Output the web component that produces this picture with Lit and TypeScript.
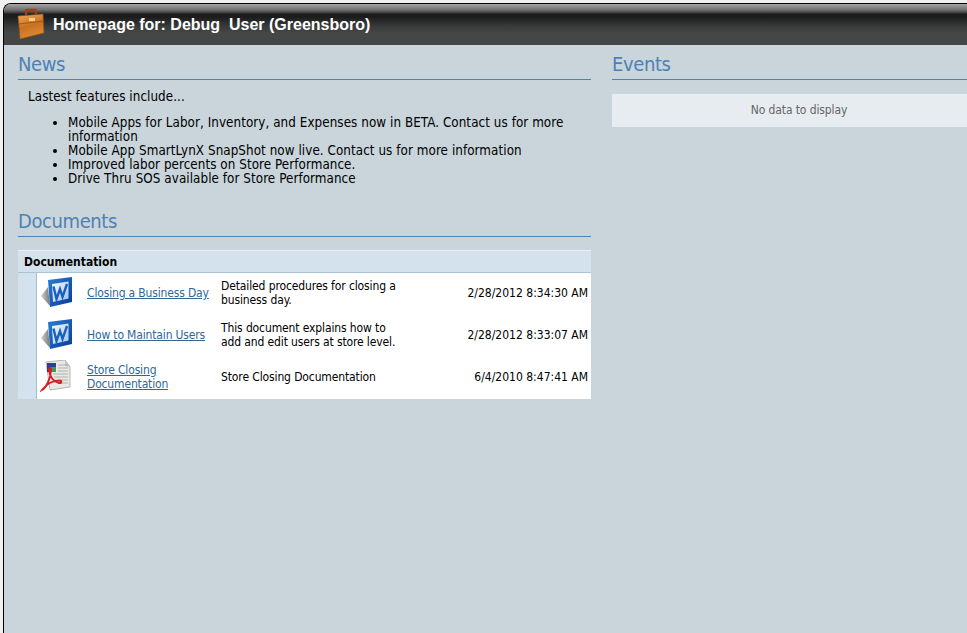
import { LitElement, html, css, svg } from "lit";
import { customElement } from "lit/decorators.js";

const word = (id: string) => svg`<svg class="ico" width="34" height="32" viewBox="0 0 34 32">
  <defs>
    <linearGradient id="${id}" x1="0" y1="0" x2="1" y2="1"><stop offset="0" stop-color="#2a7ed4"/><stop offset="1" stop-color="#0a3a9a"/></linearGradient>
    <linearGradient id="${id}p" x1="0" y1="0" x2="1" y2="1"><stop offset="0" stop-color="#f6fafe"/><stop offset="1" stop-color="#9cc6ec"/></linearGradient>
    <linearGradient id="${id}s" x1="0" y1="0" x2="1" y2="0"><stop offset="0" stop-color="#d0d0d0"/><stop offset="1" stop-color="#777"/></linearGradient>
  </defs>
  <path d="M1 20 L8 11 L10 30 Z" fill="url(#${id}s)"/>
  <path d="M8 4 L32 1 L32 26 L10 31 Z" fill="url(#${id})"/>
  <path d="M12 8 L28.500 5.500 L28.500 22.500 L13 26 Z" fill="url(#${id}p)"/>
  <path d="M13.500 10.500 L16.500 23 L20 13 L22.500 21 L27 8" fill="none" stroke="#1a5fc0" stroke-width="2.400"/>
</svg>`;

const pdf = svg`<svg class="ico" width="34" height="32" viewBox="0 0 34 32">
  <path d="M6 2 L25 0 L30 7 L30 27 L10 30 Z" fill="#e9e8e4" stroke="#a5a5a5" stroke-width=".8"/>
  <path d="M25 0 L25 6 L30 7 Z" fill="#c4c4c4"/>
  <rect x="7" y="3" width="9" height="9" fill="#27408f"/>
  <rect x="10" y="7" width="6" height="5" fill="#3d9a55"/>
  <path d="M18 5 H28 M18 8 H28 M18 11 H28 M13 14 H28 M14 17 H28 M20 20 H28 M20 23 H28" stroke="#b0b0b0" stroke-width="1"/>
  <path d="M2 30 C6 28 11 18 11 10 C11 7 8.500 7 9 10 C9.500 17 14 22 19 23 C22 23.500 22 20.500 19 20.500 C13 20.500 6 24 2 30 Z" fill="none" stroke="#d31f26" stroke-width="1.900"/>
</svg>`;

@customElement("app-root")
export class AppRoot extends LitElement {
  static styles = css`
    :host { display: block; height: 633px; overflow: hidden; background: #f0f0f0; font-family: "DejaVu Sans Condensed", "DejaVu Sans", Verdana, sans-serif; font-stretch: condensed; font-size: 12px; color: #000; }
    .frame { box-sizing: border-box; height: 636px; margin: 3px 0 0 3px; border: 1px solid #000; border-right: 0; border-bottom: 0; border-top-left-radius: 8px; overflow: hidden; background: #c9d5db; }
    .bar { height: 41px; box-sizing: border-box; display: flex; align-items: center; gap: 5px; padding-left: 12px;
      background: linear-gradient(#a6a6a6 0, #6e6e6e 6px, #3a3a3a 9px, #1c1c1c 10px, #1c1c1c 13px, #383a3a 22px, #454746 29px, #454746 100%); }
    .brief { display: block; margin-top: -1px; }
    .bar h1 { margin: 0; font: bold 16px "Liberation Sans", Arial, sans-serif; color: #fff; white-space: pre; }
    .cols { display: grid; grid-template-columns: 573px 1fr; column-gap: 21px; padding: 6px 0 0 14px; }
    h2 { margin: 0; font-size: 20px; font-weight: 400; line-height: 27px; color: #4f81b3; border-bottom: 1px solid #5383ad; height: 29px; box-sizing: border-box; letter-spacing: -.4px; }
    .news { padding: 0 0 0 10px; font-size: 13.3px; letter-spacing: .07px; }
    .news p { margin: 9px 0 11px; line-height: 16px; }
    .news ul { margin: 0 0 22px; padding: 0 0 0 40px; line-height: 14px; }
    .docs-head { margin-top: 13px; height: 23px; box-sizing: border-box; background: #d3e2ec; border-top: 1px solid #e6eff5; border-bottom: 1px solid #a9c4d6; font-weight: bold; padding: 1px 0 0 6px; line-height: 21px; }
    .tbl { display: grid; grid-template-columns: 19px 50px 134px 1fr auto; background: #fff; }
    .gut { grid-row: 1 / span 3; background: #d3e2ec; border-right: 1px solid #a3bfd2; }
    .cell { height: 42px; box-sizing: border-box; display: flex; align-items: center; line-height: 14px; padding-bottom: 2px; }
    .i { padding: 3px 0 0 3px; align-items: flex-start; }
    a { color: #2f6796; text-decoration: underline; letter-spacing: -.16px; }
    .date { justify-content: flex-end; padding-right: 3px; white-space: nowrap; }
    .desc { width: 180px; letter-spacing: -.12px; }
    .nodata { margin-top: 14px; height: 33px; box-sizing: border-box; padding-bottom: 2px; background: #e6ecf0; color: #666; display: flex; align-items: center; justify-content: center; width: 374px; letter-spacing: -.1px; }
  `;

  render() {
    const rows = [
      [word("w1"), "Closing a Business Day", "Detailed procedures for closing a business day.", "2/28/2012 8:34:30 AM"],
      [word("w2"), "How to Maintain Users", "This document explains how to add and edit users at store level.", "2/28/2012 8:33:07 AM"],
      [pdf, "Store Closing Documentation", "Store Closing Documentation", "6/4/2010 8:47:41 AM"],
    ];
    return html`<div class="frame">
      <div class="bar">
        <svg class="brief" width="32" height="34" viewBox="0 0 32 34">
          <defs>
            <linearGradient id="bg" x1="0" y1="0" x2="0.300" y2="1"><stop offset="0" stop-color="#f2a95a"/><stop offset=".55" stop-color="#c96f22"/><stop offset="1" stop-color="#e08a30"/></linearGradient>
          </defs>
          <path d="M10 8 V4 Q10 3 11 3 H19 Q20 3 20 4 V7" fill="none" stroke="#a23f14" stroke-width="2.400"/>
          <path d="M2 9 L27 7 L28 26 L4 32 Z" fill="url(#bg)" stroke="#7d5220" stroke-width=".7"/>
          <path d="M3 17 L28 14" stroke="#8f4f15" stroke-width=".8"/>
          <rect x="13" y="11" width="6" height="3" fill="#f4d27a"/>
        </svg>
        <h1>Homepage for: Debug  User (Greensboro)</h1>
      </div>
      <div class="cols">
        <div>
          <h2>News</h2>
          <div class="news">
            <p>Lastest features include...</p>
            <ul>
              <li>Mobile Apps for Labor, Inventory, and Expenses now in BETA. Contact us for more information</li>
              <li>Mobile App SmartLynX SnapShot now live. Contact us for more information</li>
              <li>Improved labor percents on Store Performance.</li>
              <li>Drive Thru SOS available for Store Performance</li>
            </ul>
          </div>
          <h2>Documents</h2>
          <div class="docs-head">Documentation</div>
          <div class="tbl">
            <div class="gut"></div>
            ${rows.map(r => html`
              <div class="cell i">${r[0]}</div>
              <div class="cell"><a href="#">${r[1]}</a></div>
              <div class="cell"><span class="desc">${r[2]}</span></div>
              <div class="cell date">${r[3]}</div>`)}
          </div>
        </div>
        <div>
          <h2>Events</h2>
          <div class="nodata">No data to display</div>
        </div>
      </div>
    </div>`;
  }
}
